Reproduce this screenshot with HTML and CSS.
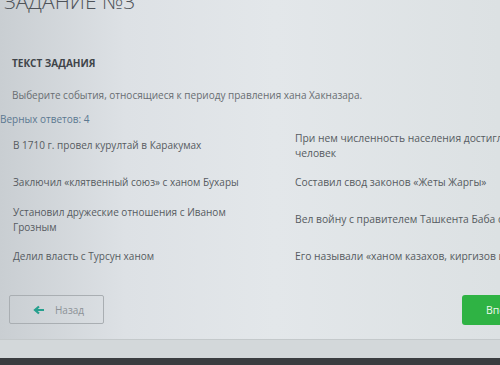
FILE: index.html
```html
<!DOCTYPE html>
<html>
  <head>
    <meta charset="UTF-8">
    <title>Задание №3</title>
    <link rel="stylesheet" href="styles.css">
  </head>
  <body>
    <div class="screen">
      <h1 class="task-title">ЗАДАНИЕ №3</h1>

      <section class="task">
        <h2 class="task-label">ТЕКСТ ЗАДАНИЯ</h2>
        <p class="task-text">Выберите события, относящиеся к периоду правления хана Хакназара.</p>
        <p class="task-count">Верных ответов: 4</p>

        <div class="options">
          <div class="option">В 1710 г. провел курултай в Каракумах</div>
          <div class="option">При нем численность населения достигло 1 миллиона человек</div>
          <div class="option">Заключил «клятвенный союз» с ханом Бухары</div>
          <div class="option">Составил свод законов «Жеты Жаргы»</div>
          <div class="option">Установил дружеские отношения с Иваном Грозным</div>
          <div class="option">Вел войну с правителем Ташкента Баба султаном</div>
          <div class="option">Делил власть с Турсун ханом</div>
          <div class="option">Его называли «ханом казахов, киргизов и ногайцев»</div>
        </div>

        <div class="nav">
          <button type="button" class="btn-back">
            <svg class="arrow" width="12" height="10" viewBox="0 0 12 10">
              <path d="M11 5H2.5M6 1.5L2 5l4 3.5" fill="none" stroke="currentColor" stroke-width="2.2"/>
            </svg>
            Назад
          </button>
          <button type="button" class="btn-next">Вперед</button>
        </div>
      </section>

      <div class="footer"></div>
      <div class="bezel"></div>
    </div>
  </body>
</html>
```

FILE: styles.css
```css
:root {
  --text-color: #565b61;
  --label-color: #3f4449;
  --count-color: #5b7891;
  --green: #2fb344;
  --teal: #26a08e;
}

html, body {
  margin: 0;
  height: 100%;
  overflow: hidden;
}

body {
  font-family: "Open Sans", Arial, sans-serif;
  background: linear-gradient(90deg, #c9ced2 0%, #dde1e5 25%, #e3e7ea 55%, #dce1e3 100%);
}

.screen {
  width: 640px;
  height: 365px;
  display: flex;
  flex-direction: column;
}

.task-title {
  margin: -10px 0 0 4px;
  font-size: 21px;
  font-weight: 300;
  line-height: 23px;
  color: #4e5359;
}

.task {
  flex: 1;
  padding: 0 0 0 12px;
}

.task-label {
  margin: 43px 0 0 0;
  font-size: 10px;
  font-weight: 700;
  line-height: 14px;
  color: var(--label-color);
}

.task-text {
  margin: 18px 0 0 0;
  font-size: 10px;
  line-height: 14px;
  color: #686d72;
}

.task-count {
  margin: 10px 0 0 -12px;
  font-size: 10px;
  line-height: 14px;
  color: var(--count-color);
}

.options {
  display: grid;
  grid-template-columns: 272px 290px;
  grid-auto-rows: 33px;
  row-gap: 4px;
  margin-top: 3px;
}

.option {
  display: flex;
  align-items: center;
  padding: 0 30px 0 1px;
  font-size: 10px;
  line-height: 15px;
  color: var(--text-color);
}

.option:nth-child(even) {
  padding: 0 0 0 11px;
  font-size: 10.3px;
}

.nav {
  display: flex;
  justify-content: space-between;
  width: 543px;
  margin-top: 22px;
  margin-left: -3px;
}

.btn-back {
  display: flex;
  align-items: center;
  gap: 10px;
  width: 95px;
  height: 29px;
  padding: 0 0 0 23px;
  border: 1px solid #a9aeb2;
  border-radius: 2px;
  background: transparent;
  font-family: inherit;
  font-size: 10px;
  color: #8c9297;
}

.arrow {
  color: var(--teal);
}

.btn-next {
  width: 90px;
  height: 30px;
  padding: 0 0 0 24px;
  border: none;
  border-radius: 3px;
  background: var(--green);
  font-family: inherit;
  font-size: 10.5px;
  color: #eef8ef;
  text-align: left;
}

.footer {
  height: 18px;
  background: #d3d8da;
  border-top: 1px solid #c4c9cb;
}

.bezel {
  height: 7px;
  background: #3a3d40;
}
```
